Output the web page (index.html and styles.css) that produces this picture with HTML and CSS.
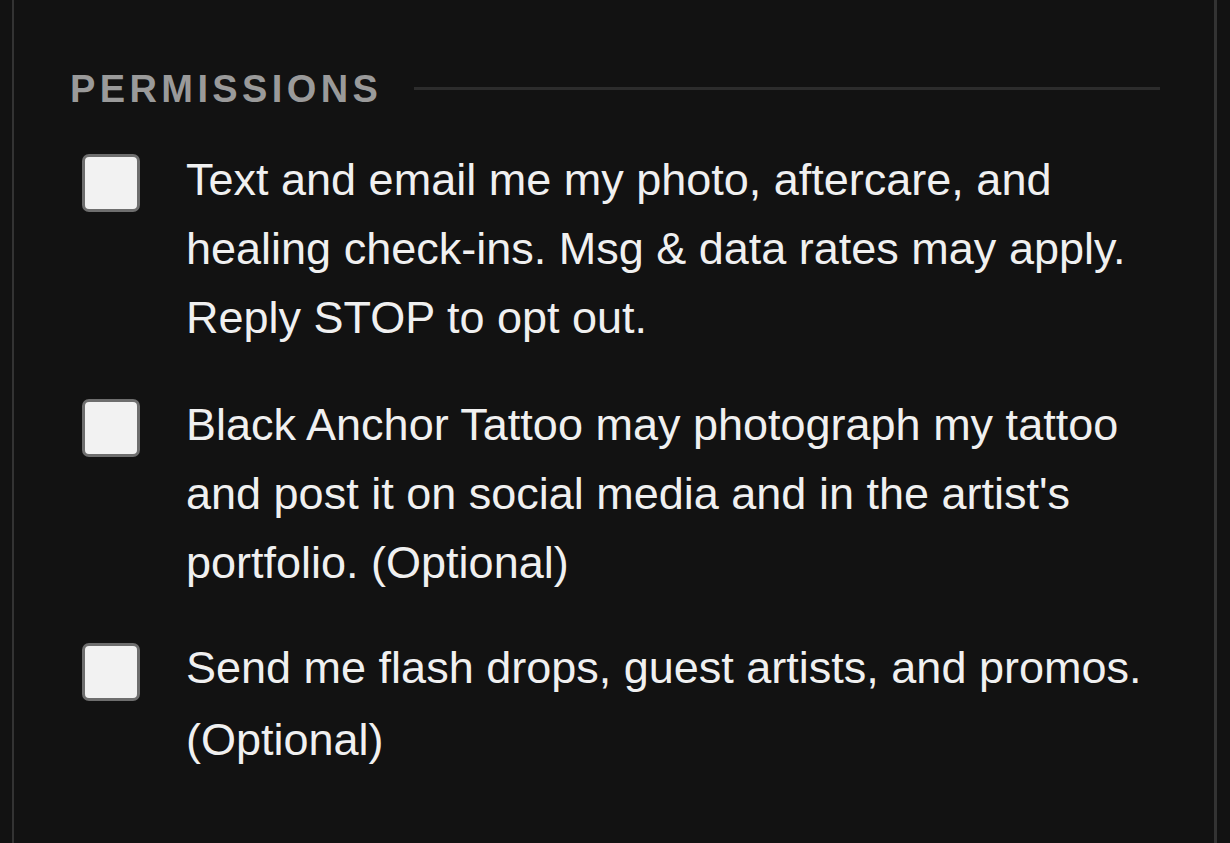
FILE: index.html
```html
<!DOCTYPE html>
<html>
<head>
    <title>Consent Form</title>
    <meta charset="UTF-8">
    <meta name="viewport" content="width=device-width, initial-scale=1.0">
    <link rel="stylesheet" href="styles.css">
</head>

<body>
    <div class="card">
        <div class="section-head">
            <h3>Permissions</h3>
            <span class="rule"></span>
        </div>

        <div class="perm-list">
            <label class="perm">
                <input type="checkbox" name="sms">
                <span>Text and email me my photo, aftercare, and healing check-ins. Msg &amp; data rates may apply. Reply STOP to opt out.</span>
            </label>

            <label class="perm">
                <input type="checkbox" name="photo">
                <span>Black Anchor Tattoo may photograph my tattoo and post it on social media and in the artist's portfolio. (Optional)</span>
            </label>

            <label class="perm perm-loose">
                <input type="checkbox" name="promos">
                <span>Send me flash drops, guest artists, and promos. (Optional)</span>
            </label>
        </div>
    </div>
</body>
</html>
```

FILE: styles.css
```css
:root {
    --bg-color: #121212;
    --text-color: #f0f0f0;
    --muted-color: #9a9a9a;
    --border-color: #333333;
    --rule-color: #2c2c2c;
}

body {
    margin: 0;
    background: var(--bg-color);
    color: var(--text-color);
    font-family: "Liberation Sans", Arial, sans-serif;
}

.card {
    margin-left: 12px;
    width: 1205px;
    box-sizing: border-box;
    min-height: 843px;
    border-left: 2px solid var(--border-color);
    border-right: 3px solid var(--border-color);
    padding: 67px 54px 0 56px;
}

.section-head {
    display: flex;
    align-items: center;
    height: 44px;
    margin-bottom: 34px;
}

.section-head h3 {
    margin: 0;
    font-size: 38px;
    line-height: 44px;
    font-weight: bold;
    letter-spacing: 4.4px;
    text-transform: uppercase;
    color: var(--muted-color);
}

.section-head .rule {
    flex: 1;
    height: 3px;
    margin-left: 32px;
    margin-top: -1px;
    background: var(--rule-color);
}

.perm-list {
    display: flex;
    flex-direction: column;
    gap: 38px;
}

.perm {
    display: flex;
    align-items: flex-start;
    padding-left: 12px;
    font-size: 45px;
    line-height: 69px;
    cursor: pointer;
}

.perm-loose {
    line-height: 72px;
    margin-top: -3px;
}

.perm input {
    appearance: none;
    -webkit-appearance: none;
    flex: none;
    width: 58px;
    height: 58px;
    margin: 9px 46px 0 0;
    box-sizing: border-box;
    border: 3px solid #6e6e6e;
    border-radius: 7px;
    background: #f2f2f2;
}

.perm-loose input {
    margin-top: 11px;
}
```
